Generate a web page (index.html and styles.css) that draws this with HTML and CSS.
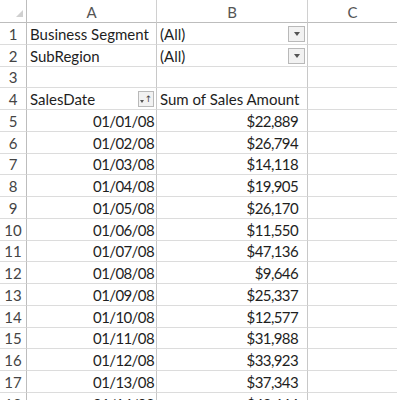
FILE: index.html
```html
<!DOCTYPE html>
<html>
<head>
<meta charset="utf-8">
<link rel="stylesheet" href="styles.css">
</head>
<body>
<div class="sheet">
  <div class="corner"><span class="tri"></span></div>
  <div class="colhead">A</div>
  <div class="colhead">B</div>
  <div class="colhead last">C</div>

  <div class="rowhead">1</div>
  <div class="cell">Business Segment</div>
  <div class="cell">(All)<span class="dd"><span class="arr"></span></span></div>
  <div class="cell c"></div>

  <div class="rowhead">2</div>
  <div class="cell">SubRegion</div>
  <div class="cell">(All)<span class="dd"><span class="arr"></span></span></div>
  <div class="cell c"></div>

  <div class="rowhead">3</div>
  <div class="cell"></div>
  <div class="cell"></div>
  <div class="cell c"></div>

  <div class="rowhead">4</div>
  <div class="cell">SalesDate<span class="flt"><span class="arr small"></span><span class="up">↑</span></span></div>
  <div class="cell">Sum of Sales Amount</div>
  <div class="cell c"></div>

  <div class="rowhead">5</div><div class="cell num">01/01/08</div><div class="cell num amt">$22,889</div><div class="cell c"></div>
  <div class="rowhead">6</div><div class="cell num">01/02/08</div><div class="cell num amt">$26,794</div><div class="cell c"></div>
  <div class="rowhead">7</div><div class="cell num">01/03/08</div><div class="cell num amt">$14,118</div><div class="cell c"></div>
  <div class="rowhead">8</div><div class="cell num">01/04/08</div><div class="cell num amt">$19,905</div><div class="cell c"></div>
  <div class="rowhead">9</div><div class="cell num">01/05/08</div><div class="cell num amt">$26,170</div><div class="cell c"></div>
  <div class="rowhead">10</div><div class="cell num">01/06/08</div><div class="cell num amt">$11,550</div><div class="cell c"></div>
  <div class="rowhead">11</div><div class="cell num">01/07/08</div><div class="cell num amt">$47,136</div><div class="cell c"></div>
  <div class="rowhead">12</div><div class="cell num">01/08/08</div><div class="cell num amt">$9,646</div><div class="cell c"></div>
  <div class="rowhead">13</div><div class="cell num">01/09/08</div><div class="cell num amt">$25,337</div><div class="cell c"></div>
  <div class="rowhead">14</div><div class="cell num">01/10/08</div><div class="cell num amt">$12,577</div><div class="cell c"></div>
  <div class="rowhead">15</div><div class="cell num">01/11/08</div><div class="cell num amt">$31,988</div><div class="cell c"></div>
  <div class="rowhead">16</div><div class="cell num">01/12/08</div><div class="cell num amt">$33,923</div><div class="cell c"></div>
  <div class="rowhead">17</div><div class="cell num">01/13/08</div><div class="cell num amt">$37,343</div><div class="cell c"></div>
  <div class="rowhead">18</div><div class="cell num">01/14/08</div><div class="cell num amt">$43,444</div><div class="cell c"></div>
</div>
</body>
</html>
```
FILE: styles.css
```css
html, body {
  margin: 0;
  padding: 0;
  background: #fff;
  overflow: hidden;
}
.sheet {
  display: grid;
  grid-template-columns: 27px 130px 151px 89px;
  grid-template-rows: 23px;
  grid-auto-rows: 21.75px;
  font-family: Lato, "Liberation Sans", sans-serif;
  font-size: 15px;
  color: #1e1e1e;
}
.corner {
  border-right: 1px solid #bdbdbd;
  border-bottom: 1px solid #bdbdbd;
  display: flex;
  justify-content: flex-end;
  align-items: flex-end;
  padding: 0 3px 5px 0;
  box-sizing: border-box;
}
.tri {
  width: 0;
  height: 0;
  border-left: 7px solid transparent;
  border-bottom: 7px solid #d0d0d0;
}
.colhead {
  display: flex;
  align-items: center;
  justify-content: center;
  color: #555;
  border-right: 1px solid #d0d0d0;
  border-bottom: 1px solid #bdbdbd;
  box-sizing: border-box;
  padding-top: 1px;
}
.colhead.last { border-right: none; }
.rowhead {
  display: flex;
  align-items: center;
  justify-content: center;
  color: #444;
  border-right: 1px solid #bdbdbd;
  border-bottom: 1px solid #dcdcdc;
  box-sizing: border-box;
  padding-top: 1px;
}
.cell {
  display: flex;
  align-items: center;
  border-right: 1px solid #c8c8c8;
  border-bottom: 1px solid #dcdcdc;
  box-sizing: border-box;
  padding: 1px 2px 0 3px;
  white-space: nowrap;
  overflow: hidden;
}
.cell.c { border-right: none; }
.num {
  justify-content: flex-end;
  letter-spacing: -0.6px;
}
.amt { padding-right: 9px; }
.dd {
  margin-left: auto;
  width: 17px;
  height: 16px;
  box-sizing: border-box;
  border: 1px solid #b9b9b9;
  background: #f2f2f2;
  display: flex;
  align-items: center;
  justify-content: center;
}
.arr {
  width: 0;
  height: 0;
  border-left: 3px solid transparent;
  border-right: 3px solid transparent;
  border-top: 4px solid #555;
  margin-top: 1px;
}
.flt {
  margin-left: auto;
  width: 16px;
  height: 16px;
  box-sizing: border-box;
  border: 1px solid #b9b9b9;
  background: #f2f2f2;
  display: flex;
  align-items: center;
  justify-content: center;
  gap: 1px;
}
.arr.small {
  border-left-width: 2px;
  border-right-width: 2px;
  border-top-width: 3px;
  margin-top: 5px;
}
.up {
  font-family: "DejaVu Sans", sans-serif;
  font-size: 9px;
  color: #444;
  line-height: 1;
}
```
